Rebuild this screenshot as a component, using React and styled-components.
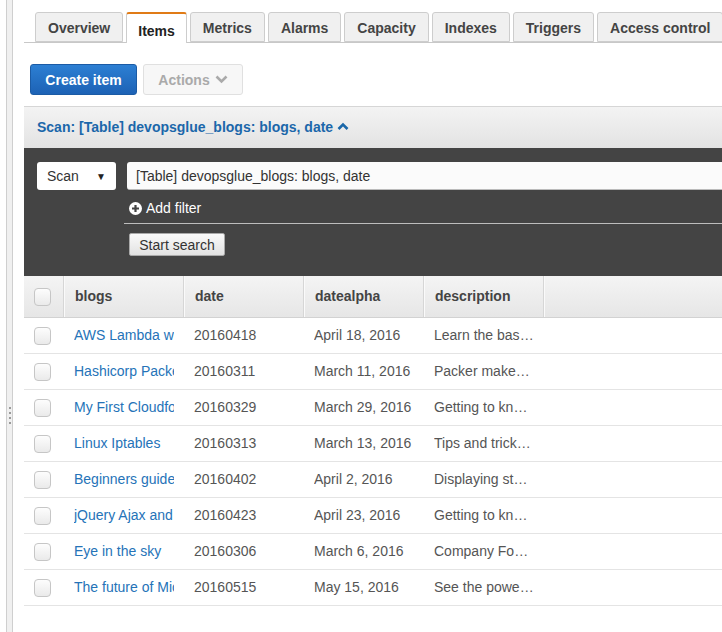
import React from 'react'
import styled, { createGlobalStyle } from 'styled-components'

const GlobalStyle = createGlobalStyle`
  html, body {
    margin: 0;
    padding: 0;
    background: #fff;
    overflow: hidden;
  }
  body {
    font-family: "Liberation Sans", Arial, sans-serif;
    font-size: 14px;
    color: #444;
  }
`

const tabs = ['Overview', 'Items', 'Metrics', 'Alarms', 'Capacity', 'Indexes', 'Triggers', 'Access control']

const rows = [
  ['AWS Lambda with API Gateway', '20160418', 'April 18, 2016', 'Learn the basics of lambda'],
  ['Hashicorp Packer', '20160311', 'March 11, 2016', 'Packer makes it easy'],
  ['My First Cloudformation', '20160329', 'March 29, 2016', 'Getting to know cloudformation'],
  ['Linux Iptables', '20160313', 'March 13, 2016', 'Tips and tricks for iptables'],
  ['Beginners guide to docker', '20160402', 'April 2, 2016', 'Displaying static content'],
  ['jQuery Ajax and CORS', '20160423', 'April 23, 2016', 'Getting to know CORS'],
  ['Eye in the sky', '20160306', 'March 6, 2016', 'Company Founded'],
  ['The future of Microservices', '20160515', 'May 15, 2016', 'See the power of micro'],
]

const App = () => {
  return (
    <>
      <GlobalStyle />
      <Page>
        <Gutter>
          <Splitter>
            <Grip>
              <i /><i /><i /><i />
            </Grip>
          </Splitter>
        </Gutter>
        <Main>
          <TabBar>
            {tabs.map((t) => (
              <Tab key={t} active={t === 'Items'}>{t}</Tab>
            ))}
          </TabBar>

          <Toolbar>
            <PrimaryButton>Create item</PrimaryButton>
            <DisabledButton>
              Actions
              <svg width="13" height="9" viewBox="0 0 13 9">
                <path d="M1.5 1.5 L6.5 6.5 L11.5 1.5" fill="none" stroke="#aaa" strokeWidth="2.6" />
              </svg>
            </DisabledButton>
          </Toolbar>

          <QueryHeader>
            Scan: [Table] devopsglue_blogs: blogs, date
            <svg width="12" height="9" viewBox="0 0 12 9">
              <path d="M1.5 7 L6 2.5 L10.5 7" fill="none" stroke="#1a67a9" strokeWidth="2.6" />
            </svg>
          </QueryHeader>

          <QueryPanel>
            <QueryRow>
              <Select>
                <span>Scan</span>
                <Caret>▼</Caret>
              </Select>
              <Input>[Table] devopsglue_blogs: blogs, date</Input>
            </QueryRow>
            <FilterArea>
              <AddFilter>
                <svg width="13" height="13" viewBox="0 0 13 13">
                  <circle cx="6.5" cy="6.5" r="6.5" fill="#fff" />
                  <path d="M6.5 3 V10 M3 6.5 H10" stroke="#444" strokeWidth="2.2" />
                </svg>
                Add filter
              </AddFilter>
              <SearchRow>
                <SearchButton>Start search</SearchButton>
              </SearchRow>
            </FilterArea>
          </QueryPanel>

          <Table>
            <HeadRow>
              <CheckCell><Checkbox /></CheckCell>
              <HeadCell>blogs</HeadCell>
              <HeadCell>date</HeadCell>
              <HeadCell>datealpha</HeadCell>
              <HeadCell>description</HeadCell>
              <Fill />
            </HeadRow>
            {rows.map((r) => (
              <BodyRow key={r[1]}>
                <CheckCell><Checkbox /></CheckCell>
                <Cell link><span>{r[0]}</span></Cell>
                <Cell><span>{r[1]}</span></Cell>
                <Cell><span>{r[2]}</span></Cell>
                <Cell ellipsis><span>{r[3]}</span></Cell>
                <Fill />
              </BodyRow>
            ))}
          </Table>
        </Main>
      </Page>
    </>
  )
}

const Page = styled.div`
  display: flex;
  width: 722px;
  height: 632px;
  overflow: hidden;
`
const Gutter = styled.div`
  width: 24px;
  flex: none;
  display: flex;
  padding-left: 6px;
  box-sizing: border-box;
`
const Splitter = styled.div`
  width: 5px;
  height: 100%;
  box-sizing: content-box;
  background: #f0f0f0;
  border-left: 1px solid #cfcfcf;
  border-right: 1px solid #cfcfcf;
  display: flex;
  justify-content: center;
  padding-top: 407px;
`
const Grip = styled.div`
  display: flex;
  flex-direction: column;
  gap: 3px;
  i {
    display: block;
    width: 2px;
    height: 2px;
    background: #9a9a9a;
  }
`
const Main = styled.div`
  flex: 1;
  min-width: 0;
  display: flex;
  flex-direction: column;
`
const TabBar = styled.div`
  display: flex;
  align-items: flex-end;
  gap: 3px;
  height: 43px;
  padding-left: 11px;
  border-bottom: 1px solid #c8c8c8;
  box-sizing: border-box;
  white-space: nowrap;
`
const Tab = styled.div`
  flex: none;
  height: ${(p) => (p.active ? '31px' : '30px')};
  margin-bottom: ${(p) => (p.active ? '-1px' : '0')};
  box-sizing: border-box;
  padding: ${(p) => (p.active ? '5px 11px 0' : '1px 12px 0')};
  display: flex;
  align-items: center;
  font-weight: bold;
  font-size: 14px;
  color: ${(p) => (p.active ? '#222' : '#444')};
  background: ${(p) => (p.active ? '#fff' : '#f0f0f0')};
  border: 1px solid #cdcdcd;
  border-bottom: ${(p) => (p.active ? 'none' : '1px solid #cdcdcd')};
  border-top: ${(p) => (p.active ? '2px solid #e07b16' : '1px solid #cdcdcd')};
  border-radius: 3px 3px 0 0;
`
const Toolbar = styled.div`
  display: flex;
  gap: 6px;
  padding: 21px 0 0 6px;
  height: 63px;
  box-sizing: border-box;
`
const PrimaryButton = styled.button`
  height: 31px;
  width: 107px;
  padding: 0;
  border: 1px solid #1b5ba5;
  border-radius: 3px;
  background: linear-gradient(#2c7fd3, #1d62b5);
  color: #fff;
  font-family: inherit;
  font-weight: bold;
  font-size: 14px;
`
const DisabledButton = styled.button`
  height: 31px;
  width: 100px;
  padding: 0;
  display: flex;
  align-items: center;
  justify-content: center;
  gap: 5px;
  border: 1px solid #e0e0e0;
  border-radius: 3px;
  background: #f7f7f7;
  color: #aaa;
  font-family: inherit;
  font-weight: bold;
  font-size: 14px;
`
const QueryHeader = styled.div`
  height: 42px;
  box-sizing: border-box;
  display: flex;
  align-items: center;
  gap: 4px;
  padding: 0 0 2px 13px;
  border-top: 1px solid #d6d6d6;
  background: linear-gradient(#f3f3f3, #e3e3e3);
  color: #1b67aa;
  font-weight: bold;
  font-size: 14px;
  white-space: nowrap;
`
const QueryPanel = styled.div`
  background: #444;
  height: 128px;
  box-sizing: border-box;
  padding: 14px 0 0 13px;
`
const QueryRow = styled.div`
  display: flex;
  gap: 11px;
`
const Select = styled.div`
  width: 79px;
  height: 28px;
  flex: none;
  box-sizing: border-box;
  background: #fff;
  border-radius: 3px;
  display: flex;
  align-items: center;
  justify-content: space-between;
  padding: 0 10px 0 10px;
  font-size: 14px;
  color: #333;
`
const Caret = styled.span`
  font-size: 10px;
  color: #222;
`
const Input = styled.div`
  flex: 1;
  height: 28px;
  box-sizing: border-box;
  background: #fbfbfb;
  border-radius: 3px 0 0 3px;
  border-bottom: 1px solid #bbb;
  display: flex;
  align-items: center;
  padding-left: 9px;
  font-size: 14px;
  color: #333;
  white-space: nowrap;
`
const FilterArea = styled.div`
  margin-left: 87px;
  display: flex;
  flex-direction: column;
`
const AddFilter = styled.div`
  height: 34px;
  box-sizing: border-box;
  display: flex;
  align-items: center;
  gap: 4px;
  padding: 3px 0 0 5px;
  color: #fff;
  font-size: 14px;
  border-bottom: 1px solid #bdbdbd;
`
const SearchRow = styled.div`
  padding: 9px 0 0 5px;
`
const SearchButton = styled.button`
  height: 23px;
  width: 96px;
  padding: 0;
  border: 1px solid #aaa;
  border-radius: 2px;
  background: linear-gradient(#fafafa, #e2e2e2);
  color: #333;
  font-family: inherit;
  font-size: 14px;
`
const Table = styled.div`
  display: flex;
  flex-direction: column;
`
const HeadRow = styled.div`
  display: flex;
  height: 42px;
  background: linear-gradient(#f4f4f4, #e6e6e6);
  border-bottom: 1px solid #d2d2d2;
  box-sizing: border-box;
`
const BodyRow = styled.div`
  display: flex;
  height: 36px;
  box-sizing: border-box;
  border-bottom: 1px solid #e4e4e4;
`
const CheckCell = styled.div`
  width: 40px;
  flex: none;
  display: flex;
  align-items: center;
  padding-left: 10px;
  box-sizing: border-box;
  ${HeadRow} & {
    border-right: 1px solid #d6d6d6;
    box-shadow: 1px 0 0 #fafafa;
  }
`
const Checkbox = styled.span`
  width: 17px;
  height: 18px;
  box-sizing: border-box;
  border: 1px solid #c6c6c6;
  border-radius: 4px;
  background: linear-gradient(#fdfdfd, #eaeaea);
`
const HeadCell = styled.div`
  width: 120px;
  flex: none;
  box-sizing: border-box;
  padding: 0 11px 2px;
  display: flex;
  align-items: center;
  font-weight: bold;
  font-size: 14px;
  color: #444;
  border-right: 1px solid #d6d6d6;
  box-shadow: 1px 0 0 #fafafa;
`
const Cell = styled.div`
  width: 120px;
  flex: none;
  box-sizing: border-box;
  padding: 0 10px;
  line-height: 34px;
  font-size: 14px;
  color: ${(p) => (p.link ? '#2573b8' : '#555')};
  span {
    display: block;
    white-space: nowrap;
    overflow: hidden;
    text-overflow: ${(p) => (p.ellipsis ? 'ellipsis' : 'clip')};
  }
`
const Fill = styled.div`
  flex: 1;
`

export default App
